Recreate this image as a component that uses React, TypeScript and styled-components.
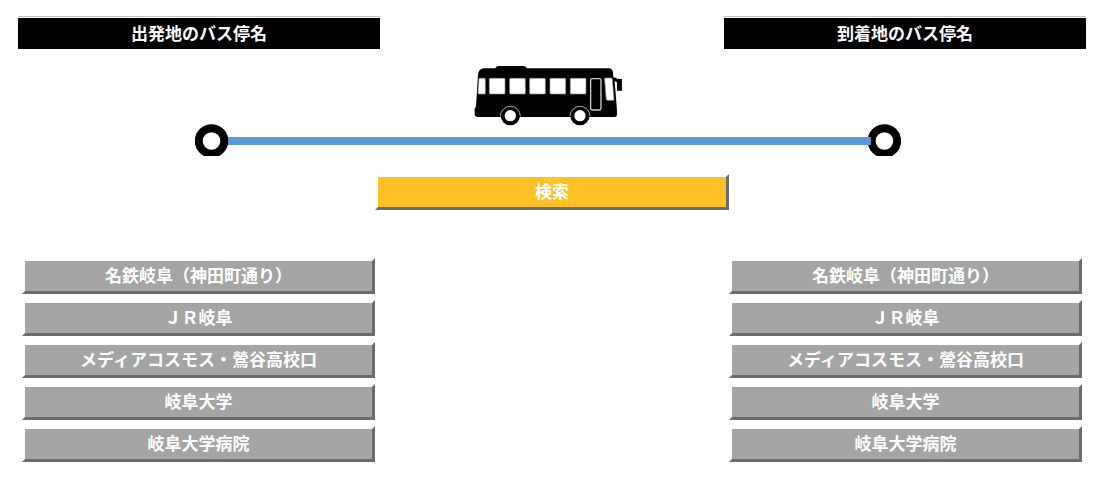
import React from "react";
import styled, { createGlobalStyle } from "styled-components";

const GlobalStyle = createGlobalStyle`
  * { box-sizing: border-box; }
  body {
    margin: 0;
    background: #fff;
    font-family: "Liberation Sans", "Noto Sans CJK JP", sans-serif;
    font-size: 17px;
    line-height: 24px;
    font-weight: 700;
  }
`;

const Page = styled.main`
  padding: 16px 24px 32px 18px;
`;

const Columns = styled.div`
  display: grid;
  grid-template-columns: 362fr 344fr 362fr;
`;

const Heading = styled.h2<{ $side: "left" | "right" }>`
  grid-column: ${(p) => (p.$side === "left" ? 1 : 3)};
  margin: 0;
  padding: 6px 0 2px;
  border-top: 1px solid #bcc3bc;
  box-shadow: inset 0 1px #fff;
  background: #000;
  color: #fff;
  font-size: 17px;
  line-height: 24px;
  text-align: center;
`;

const Route = styled.svg`
  display: block;
  width: 66.1%;
  margin: 15px 0 18px 16.6%;
`;

const Button = styled.button<{ $tone: "search" | "stop" }>`
  display: block;
  width: 100%;
  height: 36px;
  padding: 2px 0 0;
  border: 3px solid;
  border-color: #fff #6c6c6c #6c6c6c #fff;
  background: ${(p) => (p.$tone === "search" ? "#ffc028" : "#a5a5a5")};
  color: #fff;
  font: inherit;
  text-align: center;
  cursor: pointer;
`;

const SearchRow = styled.div`
  width: 33.1%;
  margin: 0 auto 48px;
`;

const StopList = styled.ul<{ $side: "left" | "right" }>`
  grid-column: ${(p) => (p.$side === "left" ? 1 : 3)};
  display: grid;
  gap: 6px;
  margin: 0;
  padding: ${(p) => (p.$side === "left" ? "0 5px 0 4px" : "0 4px 0 5px")};
  list-style: none;
`;

const stops = [
  "名鉄岐阜（神田町通り）",
  "ＪＲ岐阜",
  "メディアコスモス・鶯谷高校口",
  "岐阜大学",
  "岐阜大学病院",
];

const windows = [88, 149, 209, 270, 331];
const wheels = [151, 360];

function RouteDrawing() {
  return (
    <Route viewBox="0 0 706 92" aria-hidden="true">
      <circle cx="16.5" cy="77" r="12.8" fill="#fff" stroke="#000" strokeWidth="8" />
      <circle cx="689.5" cy="77" r="12.8" fill="#fff" stroke="#000" strokeWidth="8" />
      <rect x="33" y="73" width="643" height="8" fill="#5b9bd5" />
      <g transform="translate(265 -9) scale(.33333)">
        <path
          d="M54 60Q56 41 72 40H106Q109 33 116 33H192Q198 34 201 40H446Q457 41 459 52L460 67L470 69V71L486 72V107H471V82L464 78L471 164V180Q471 186 464 186H54Q44 186 44 178V162Q44 157 48 156Z"
          fill="#000"
        />
        <path d="M60 70H74Q76 70 76 73V115Q76 117 74 117H56Q54 117 54 114L57 73Q57 70 60 70Z" fill="#fff" stroke="#999" strokeWidth="2" />
        {windows.map((x) => (
          <rect key={x} x={x} y="70" width="47" height="47" rx="3" fill="#fff" stroke="#999" strokeWidth="2" />
        ))}
        <rect x="392" y="71" width="31" height="94" rx="5" fill="none" stroke="#ccc" strokeWidth="4" />
        <path d="M436 69H454Q456 69 457 72L462 134Q462 136 460 136H443Q440 136 439 133L434 72Q434 69 436 69Z" fill="#fff" stroke="#999" strokeWidth="2" />
        {wheels.map((x) => (
          <g key={x}>
            <circle cx={x} cy="182" r="23" fill="#fff" stroke="#000" strokeWidth="12" />
            <path d={`M${x - 30} 184A30 30 0 0 1 ${x + 30} 184`} fill="none" stroke="#aaa" strokeWidth="3" />
          </g>
        ))}
      </g>
    </Route>
  );
}

function Stops({ side, label }: { side: "left" | "right"; label: string }) {
  return (
    <StopList $side={side} aria-label={label}>
      {stops.map((name) => (
        <li key={name}>
          <Button type="button" $tone="stop">{name}</Button>
        </li>
      ))}
    </StopList>
  );
}

export default function App() {
  return (
    <>
      <GlobalStyle />
      <Page lang="ja">
        <Columns>
          <Heading $side="left">出発地のバス停名</Heading>
          <Heading $side="right">到着地のバス停名</Heading>
        </Columns>
        <RouteDrawing />
        <SearchRow>
          <Button type="button" $tone="search">検索</Button>
        </SearchRow>
        <Columns>
          <Stops side="left" label="出発地のバス停名" />
          <Stops side="right" label="到着地のバス停名" />
        </Columns>
      </Page>
    </>
  );
}
